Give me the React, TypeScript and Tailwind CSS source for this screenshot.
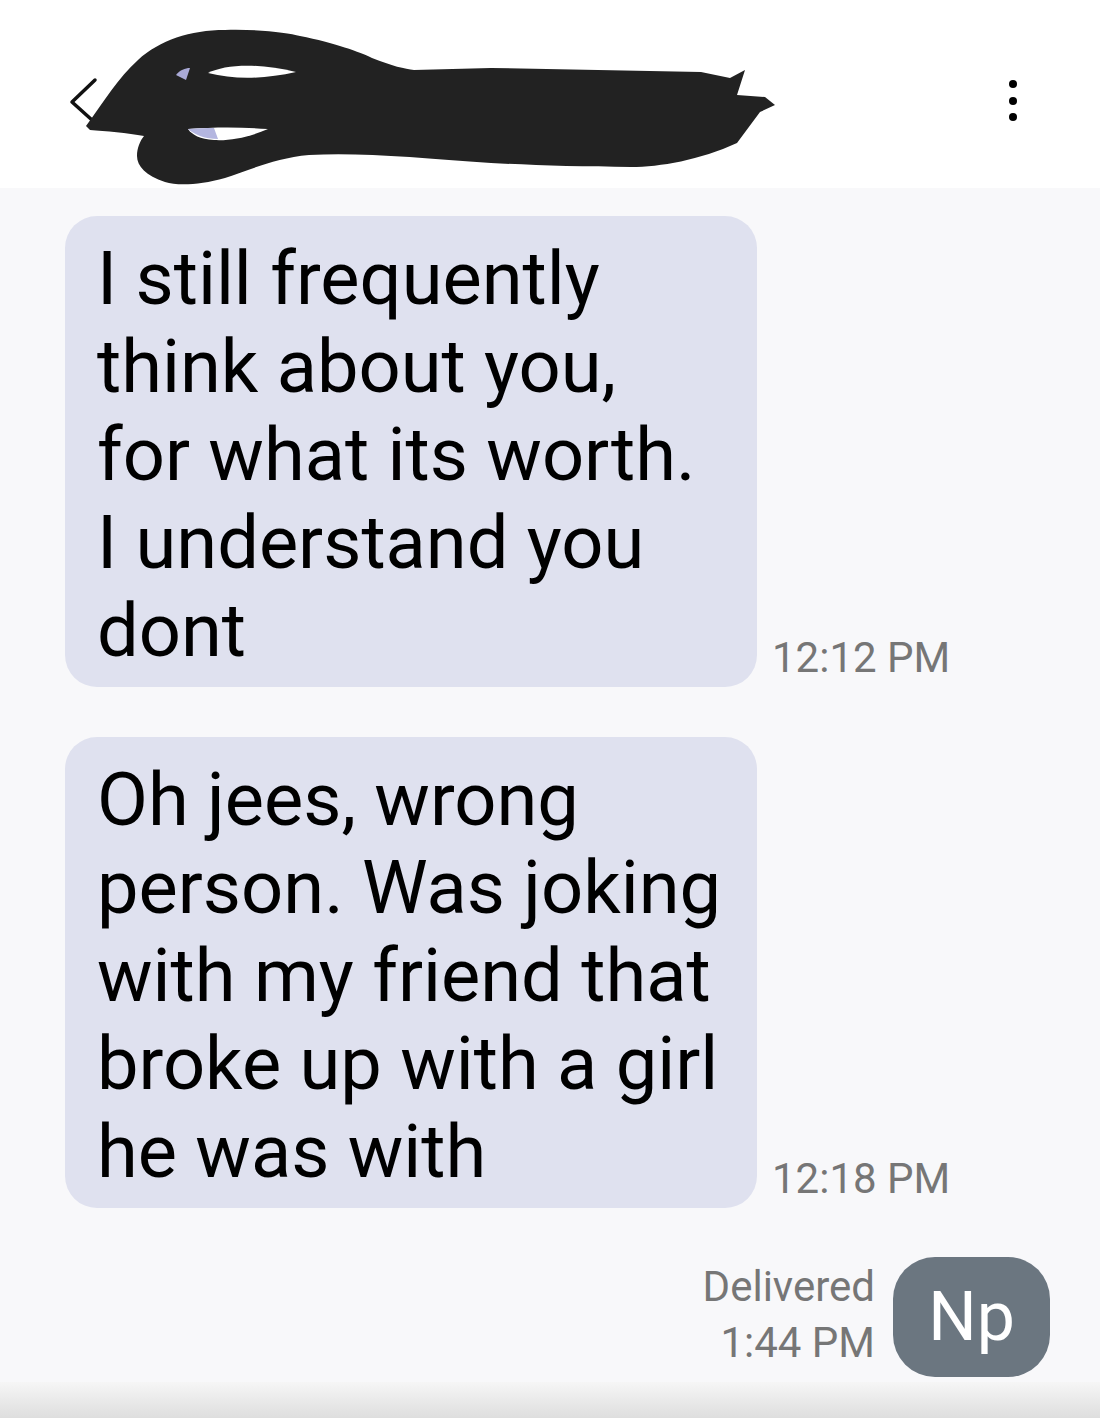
const firstMessage: string[] = [
  'I still frequently',
  'think about you,',
  'for what its worth.',
  'I understand you',
  'dont',
];

const secondMessage: string[] = [
  'Oh jees, wrong',
  'person. Was joking',
  'with my friend that',
  'broke up with a girl',
  'he was with',
];

const Redaction: React.FC = () => (
  <svg
    className="absolute left-0 top-0"
    width="800"
    height="188"
    viewBox="0 0 800 188"
  >
    <path
      d="M86 126 C 105 100, 118 78, 138 60 C 160 40, 190 30, 225 30 C 260 29, 288 33, 300 36 C 335 43, 360 52, 372 58 C 392 66, 405 69, 414 70 L 491 68 L 701 72 L 730 78 L 745 70 L 737 95 L 765 97 L 775 105 L 760 112 L 737 143 C 700 160, 660 167, 631 167 C 580 167, 530 165, 491 163 C 420 158, 360 152, 309 155 C 275 158, 250 170, 225 178 C 200 185, 178 186, 165 182 C 146 176, 137 166, 137 156 C 137 148, 140 141, 144 136 C 128 133, 105 131, 90 130 Z"
      fill="#222222"
    />
    <path d="M208 73 C 225 64, 260 63, 296 72 C 265 79, 235 80, 208 73 Z" fill="#ffffff" />
    <path d="M176 75 C 180 70, 185 68, 190 68 L 186 80 Z" fill="#a9a9d6" />
    <path d="M188 129 C 215 127, 240 127, 268 129 C 250 137, 230 141, 214 140 C 200 139, 192 135, 188 129 Z" fill="#ffffff" />
    <path d="M188 129 C 198 128, 206 128, 214 128 L 218 139 C 205 139, 195 135, 188 129 Z" fill="#b4b6e0" />
  </svg>
);

const Bubble: React.FC<{ lines: string[]; time: string }> = ({ lines, time }) => (
  <div className="flex items-end">
    <div className="ml-[65px] w-[692px] rounded-[32px] bg-[#dfe1ef] pl-[32px] pt-[19px] pb-[12px] text-[74px] leading-[88px] text-black">
      {lines.map((line) => (
        <div key={line} className="whitespace-nowrap">
          {line}
        </div>
      ))}
    </div>
    <div className="ml-[15px] mb-[4px] text-[42px] leading-[50px] text-[#767676]">{time}</div>
  </div>
);

const App: React.FC = () => {
  return (
    <div
      className="flex h-[1418px] w-[1100px] flex-col overflow-hidden bg-[#f8f8fa]"
      style={{ fontFamily: 'Roboto, "Noto Sans", sans-serif' }}
    >
      {/* Header */}
      <div className="relative h-[188px] shrink-0 bg-white">
        <svg className="absolute left-[64px] top-[74px]" width="40" height="54" viewBox="0 0 40 54">
          <polyline points="31,6 8,28 28,46" fill="none" stroke="#111" strokeWidth="3.5" strokeLinecap="round" strokeLinejoin="round" />
        </svg>
        <Redaction />
        <div className="absolute right-[83px] top-[80px] flex flex-col items-center gap-[8.5px]">
          <span className="h-[8px] w-[8px] rounded-full bg-black" />
          <span className="h-[8px] w-[8px] rounded-full bg-black" />
          <span className="h-[8px] w-[8px] rounded-full bg-black" />
        </div>
      </div>

      {/* Messages */}
      <div className="flex flex-1 flex-col pt-[28px]">
        <Bubble lines={firstMessage} time="12:12 PM" />
        <div className="mt-[50px]">
          <Bubble lines={secondMessage} time="12:18 PM" />
        </div>

        <div className="mt-[49px] flex items-end justify-end pr-[50px]">
          <div className="mb-[6px] mr-[18px] flex flex-col items-end text-[42px] leading-[56px] text-[#767676]">
            <span>Delivered</span>
            <span>1:44 PM</span>
          </div>
          <div className="flex h-[120px] w-[157px] items-center justify-center rounded-[42px] bg-[#6b7680] text-[68px] text-white">
            Np
          </div>
        </div>
      </div>

      {/* Bottom fade */}
      <div className="h-[36px] shrink-0 bg-gradient-to-b from-[#f6f6f6] to-[#dedede]" />
    </div>
  );
};

export default App;
